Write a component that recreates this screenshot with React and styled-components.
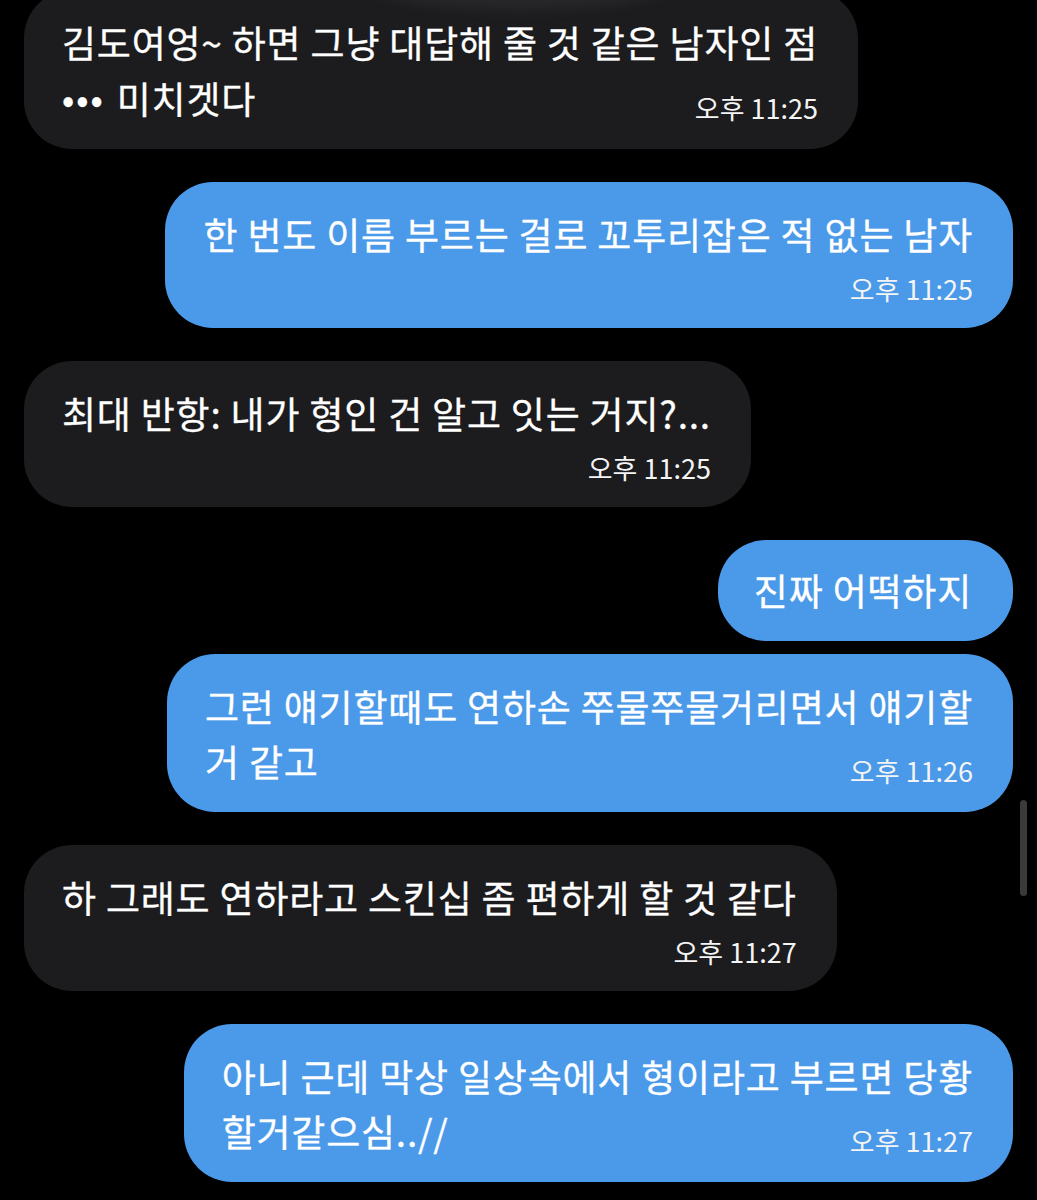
import React from "react";
import styled, { createGlobalStyle } from "styled-components";

const messages = [
  { id: 1, mine: false, lines: ["김도여엉~ 하면 그냥 대답해 줄 것 같은 남자인 점", "미치겟다"], dots: true, time: "오후 11:25", inline: true },
  { id: 2, mine: true, lines: ["한 번도 이름 부르는 걸로 꼬투리잡은 적 없는 남자"], time: "오후 11:25" },
  { id: 3, mine: false, lines: ["최대 반항: 내가 형인 건 알고 잇는 거지?..."], time: "오후 11:25" },
  { id: 4, mine: true, lines: ["진짜 어떡하지"] },
  { id: 5, mine: true, lines: ["그런 얘기할때도 연하손 쭈물쭈물거리면서 얘기할", "거 같고"], time: "오후 11:26", inline: true, grouped: true },
  { id: 6, mine: false, lines: ["하 그래도 연하라고 스킨십 좀 편하게 할 것 같다"], time: "오후 11:27" },
  { id: 7, mine: true, lines: ["아니 근데 막상 일상속에서 형이라고 부르면 당황", "할거같으심..//"], time: "오후 11:27", inline: true },
];

const App = () => {
  return (
    <>
      <GlobalStyle />
      <Screen>
        <TopShade />
        <Thread>
          {messages.map((msg) => {
            const last = msg.lines.length - 1;
            return (
              <Row key={msg.id} $mine={msg.mine} $grouped={msg.grouped}>
                <Bubble $mine={msg.mine} $short={!msg.time}>
                  {msg.lines.map((line, i) => {
                    const text = (
                      <Line key={i}>
                        {i === last && msg.dots && <Dots>•••</Dots>}
                        {line}
                      </Line>
                    );
                    if (i === last && msg.inline) {
                      return (
                        <LastRow key={i}>
                          {text}
                          <Time>{msg.time}</Time>
                        </LastRow>
                      );
                    }
                    return text;
                  })}
                  {msg.time && !msg.inline && (
                    <TimeRow>
                      <Time>{msg.time}</Time>
                    </TimeRow>
                  )}
                </Bubble>
              </Row>
            );
          })}
        </Thread>
        <ScrollThumb />
      </Screen>
    </>
  );
};

export default App;

const GlobalStyle = createGlobalStyle`
  html, body {
    margin: 0;
    padding: 0;
    background: #000;
  }
  body {
    font-family: "Noto Sans CJK KR", "Noto Sans", sans-serif;
    color: #fff;
  }
`;

const Screen = styled.div`
  position: relative;
  width: 1037px;
  height: 1200px;
  overflow: hidden;
  background: #000;
`;

const TopShade = styled.div`
  position: absolute;
  top: -40px;
  left: 370px;
  width: 300px;
  height: 50px;
  border-radius: 50%;
  background: rgba(60, 60, 64, 0.35);
  filter: blur(6px);
  z-index: 2;
`;

const Thread = styled.div`
  display: flex;
  flex-direction: column;
  gap: 33px;
  margin-top: -10px;
  padding: 0 24px;
`;

const Row = styled.div`
  display: flex;
  justify-content: ${(p) => (p.$mine ? "flex-end" : "flex-start")};
  margin-top: ${(p) => (p.$grouped ? "-20px" : "0")};
`;

const Bubble = styled.div`
  display: flex;
  flex-direction: column;
  background: ${(p) => (p.$mine ? "#4b99e9" : "#1c1c1e")};
  border-radius: 48px;
  padding: ${(p) => (p.$short ? "23px 41px 23px 36px" : "25px 40px 21px 38px")};
`;

const Line = styled.div`
  font-size: 37px;
  line-height: 55px;
  white-space: nowrap;
  letter-spacing: 0.8px;
  -webkit-text-stroke: 0.3px #fff;
`;

const Dots = styled.span`
  font-size: 36px;
  letter-spacing: 2px;
  margin-right: 12px;
  vertical-align: 1px;
`;

const LastRow = styled.div`
  display: flex;
  justify-content: space-between;
  align-items: flex-end;
  gap: 24px;
  margin-bottom: 2px;
`;

const TimeRow = styled.div`
  display: flex;
  justify-content: flex-end;
  margin-top: 12px;
`;

const Time = styled.span`
  font-size: 27px;
  line-height: 30px;
  white-space: nowrap;
  color: #f4f4f4;
  margin-bottom: 3px;
`;

const ScrollThumb = styled.div`
  position: absolute;
  right: 10px;
  top: 800px;
  width: 7px;
  height: 96px;
  border-radius: 4px;
  background: #3a3a3c;
`;
